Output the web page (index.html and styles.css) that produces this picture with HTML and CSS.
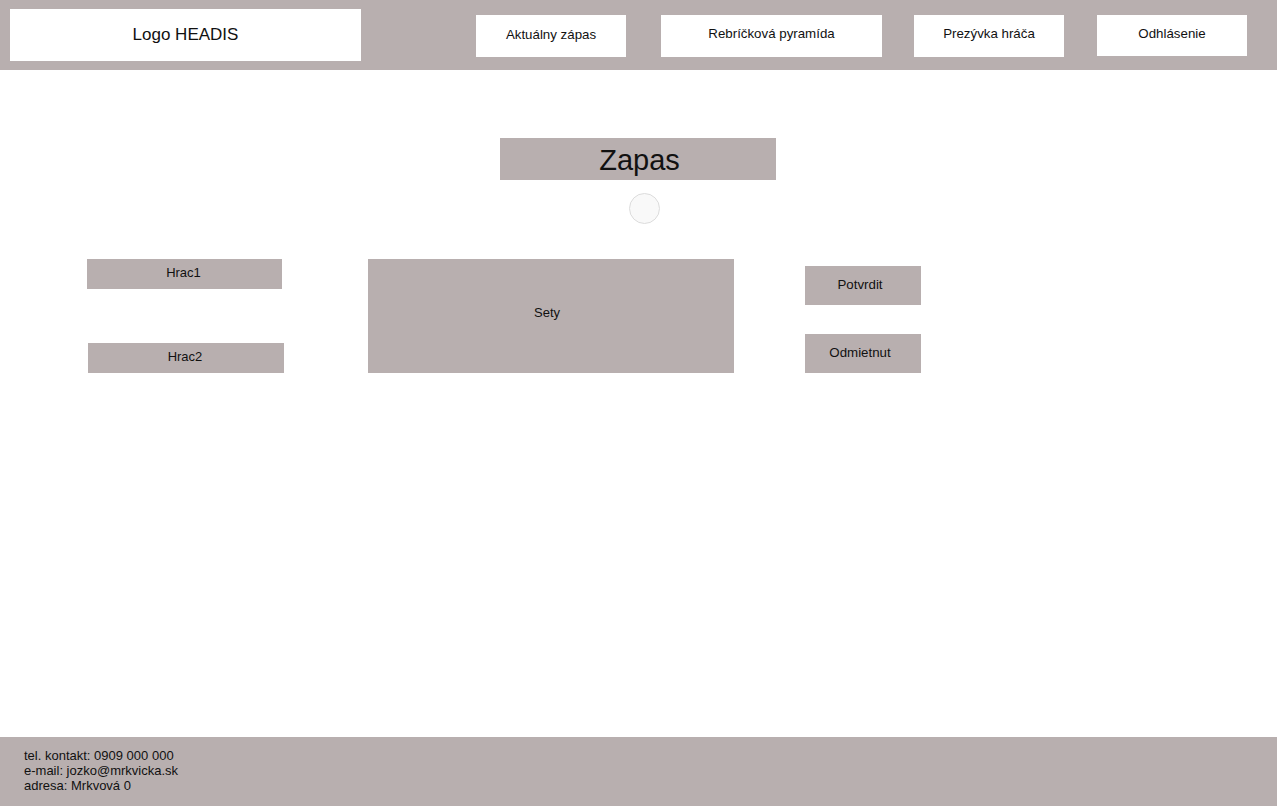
FILE: index.html
```html
<!DOCTYPE html>
<html lang="sk">
<head>
<meta charset="utf-8">
<title>HEADIS - Zapas</title>
<link rel="stylesheet" href="styles.css">
</head>
<body>
<div class="page">
  <header class="topbar">
    <div class="logo">Logo HEADIS</div>
    <nav class="nav">
      <a class="nav-btn nav-match">Aktuálny zápas</a>
      <a class="nav-btn nav-pyramid">Rebríčková pyramída</a>
      <a class="nav-btn nav-nick">Prezývka hráča</a>
      <a class="nav-btn nav-logout">Odhlásenie</a>
    </nav>
  </header>
  <main class="main">
    <h1 class="title">Zapas</h1>
    <div class="dot-row"><span class="dot"></span></div>
    <section class="match">
      <div class="players">
        <div class="player player1">Hrac1</div>
        <div class="player player2">Hrac2</div>
      </div>
      <div class="sets">Sety</div>
      <div class="actions">
        <button class="action">Potvrdit</button>
        <button class="action">Odmietnut</button>
      </div>
    </section>
  </main>
  <footer class="footer">
    <div>tel. kontakt: 0909 000 000</div>
    <div>e-mail: jozko@mrkvicka.sk</div>
    <div>adresa: Mrkvová 0</div>
  </footer>
</div>
</body>
</html>
```

FILE: styles.css
```css
* { box-sizing: border-box; }
html, body { margin: 0; padding: 0; }
body {
  font-family: "Liberation Sans", Arial, sans-serif;
  color: #111;
  background: #fff;
}
.page {
  display: flex;
  flex-direction: column;
  min-height: 806px;
}
.topbar {
  height: 70px;
  background: #b8afaf;
  display: flex;
  align-items: flex-start;
}
.logo {
  margin: 9px 0 0 10px;
  width: 351px;
  height: 52px;
  background: #fff;
  display: flex;
  align-items: center;
  justify-content: center;
  font-size: 17px;
  padding-bottom: 1px;
}
.nav {
  display: flex;
  margin-left: 115px;
  margin-top: 15px;
}
.nav-btn {
  height: 42px;
  background: #fff;
  display: flex;
  align-items: center;
  justify-content: center;
  font-size: 13.3px;
  padding-bottom: 5px;
  color: #111;
}
.nav-match { width: 150px; padding-bottom: 3px; }
.nav-pyramid { width: 221px; margin-left: 35px; }
.nav-nick { width: 150px; margin-left: 32px; }
.nav-logout { width: 150px; margin-left: 33px; height: 41px; }
.main {
  flex: 1;
}
.title {
  margin: 68px 0 0 500px;
  width: 276px;
  height: 42px;
  background: #b8afaf;
  font-weight: normal;
  font-size: 29px;
  display: flex;
  align-items: center;
  justify-content: center;
  padding: 2px 0 0 3px;
}
.dot-row {
  display: flex;
  justify-content: center;
  margin-top: 13px;
  padding-left: 12px;
}
.dot {
  width: 31px;
  height: 31px;
  border-radius: 50%;
  border: 1px solid #dcdcdc;
  background: #f9f9f9;
}
.match {
  display: flex;
  margin-top: 35px;
  padding-left: 87px;
  align-items: flex-start;
}
.players {
  display: flex;
  flex-direction: column;
  width: 197px;
}
.player {
  height: 30px;
  background: #b8afaf;
  display: flex;
  align-items: center;
  justify-content: center;
  font-size: 13px;
  padding-bottom: 3px;
}
.player1 { width: 195px; padding-right: 2px; }
.player2 { width: 196px; margin-left: 1px; margin-top: 54px; padding-right: 2px; }
.sets {
  margin-left: 84px;
  width: 366px;
  height: 114px;
  background: #b8afaf;
  display: flex;
  align-items: center;
  justify-content: center;
  font-size: 13px;
  padding: 0 8px 8px 0;
}
.actions {
  margin-left: 71px;
  margin-top: 7px;
  display: flex;
  flex-direction: column;
  gap: 29px;
}
.action {
  width: 116px;
  height: 39px;
  border: 0;
  background: #b8afaf;
  font-family: "Liberation Sans", Arial, sans-serif;
  font-size: 13.3px;
  color: #111;
  padding: 0 6px 2px 0;
}
.footer {
  height: 69px;
  background: #b8afaf;
  padding: 11px 0 0 24px;
  font-size: 13px;
  line-height: 15px;
}
```
